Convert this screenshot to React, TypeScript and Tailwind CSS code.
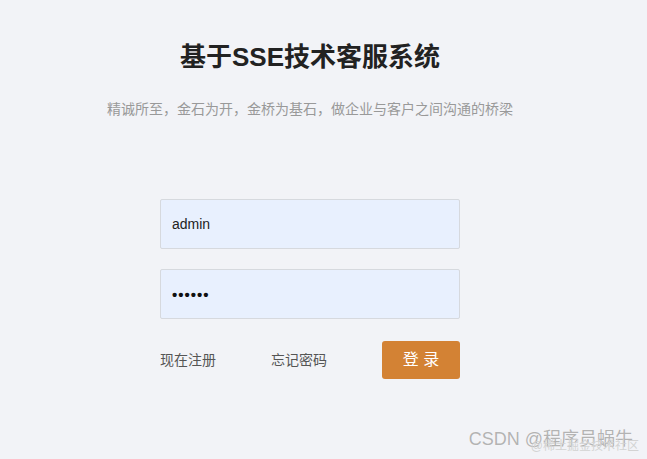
import React from "react";

const font = { fontFamily: '"Liberation Sans", "Noto Sans CJK SC", sans-serif' };

export default function App() {
  return (
    <div className="relative min-h-screen w-full overflow-hidden bg-[#f2f3f7]" style={font}>
      <div className="flex flex-col items-center pr-[27px]">
        <h1 className="mt-[40px] text-[26px] font-bold leading-[34px] text-[#222]">基于SSE技术客服系统</h1>
        <p className="mt-[25px] text-[14px] leading-[20px] text-[#999]">
          精诚所至，金石为开，金桥为基石，做企业与客户之间沟通的桥梁
        </p>

        <form className="mt-[80px] flex w-[300px] flex-col">
          <input
            defaultValue="admin"
            className="h-[50px] w-full rounded-[2px] border border-[#d6d9de] bg-[#e8f0fe] px-[11px] text-[14px] text-[#222] outline-none"
          />
          <input
            type="password"
            defaultValue="123456"
            className="mt-[20px] h-[50px] w-full rounded-[2px] border border-[#d6d9de] bg-[#e8f0fe] px-[11px] text-[15px] font-bold tracking-[1px] text-[#111] outline-none"
          />
          <div className="mt-[22px] flex items-center justify-between">
            <a className="text-[14px] text-[#555]">现在注册</a>
            <a className="text-[14px] text-[#555]">忘记密码</a>
            <button
              type="button"
              className="h-[38px] w-[78px] rounded-[3px] bg-[#d38234] text-[16px] text-white"
            >
              登 录
            </button>
          </div>
        </form>
      </div>

      <div className="absolute bottom-[6px] right-[14px]">
        <span className="text-[18px] text-[#b3b3b3] [text-shadow:0_0_1px_#fff]">CSDN @程序员蜗牛</span>
      </div>
      <div className="absolute bottom-[4px] right-[8px] text-[12px] text-[#d3d3d3]">@稀土掘金技术社区</div>
    </div>
  );
}
